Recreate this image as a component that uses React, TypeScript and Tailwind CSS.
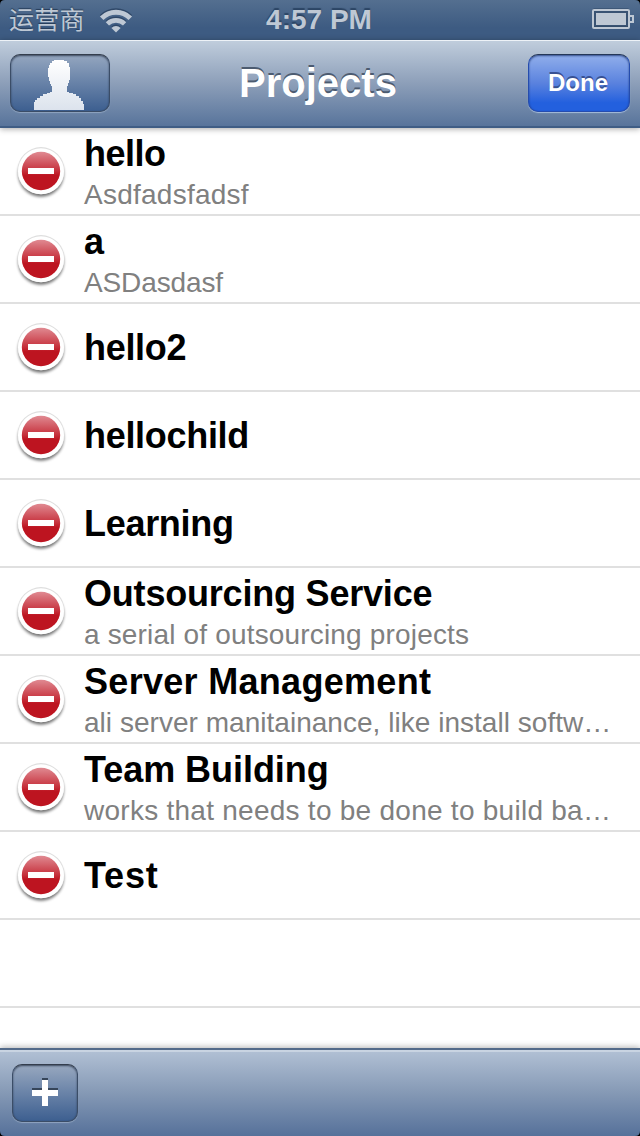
import React from 'react';

type Project = { name: string; detail?: string; nameSpacing: string; detailSpacing?: string };

const projects: Project[] = [
  { name: 'hello', detail: 'Asdfadsfadsf', nameSpacing: 'tracking-[-0.5px]', detailSpacing: 'tracking-[0.25px]' },
  { name: 'a', detail: 'ASDasdasf', nameSpacing: 'tracking-[-0.1px]', detailSpacing: 'tracking-[-0.12px]' },
  { name: 'hello2', nameSpacing: 'tracking-[-0.3px]' },
  { name: 'hellochild', nameSpacing: 'tracking-[-0.3px]' },
  { name: 'Learning', nameSpacing: 'tracking-[-0.3px]' },
  {
    name: 'Outsourcing Service',
    detail: 'a serial of outsourcing projects',
    nameSpacing: 'tracking-[-0.2px]',
    detailSpacing: 'tracking-[0.17px]',
  },
  {
    name: 'Server Management',
    detail: 'ali server manitainance, like install softw…',
    nameSpacing: 'tracking-[0.3px]',
    detailSpacing: 'tracking-[0.03px]',
  },
  {
    name: 'Team Building',
    detail: 'works that needs to be done to build ba…',
    nameSpacing: 'tracking-[-0.05px]',
    detailSpacing: 'tracking-[0.26px]',
  },
  { name: 'Test', nameSpacing: 'tracking-[0.8px]' },
];

function DeleteIcon() {
  return (
    <svg className="ml-[12px] h-[64px] w-[60px] shrink-0" viewBox="0 0 60 64">
      <defs>
        <linearGradient id="gloss" x1="0" y1="0" x2="0" y2="1">
          <stop offset="0" stopColor="#e08a92" />
          <stop offset="0.5" stopColor="#c6303b" />
          <stop offset="0.62" stopColor="#bd1420" />
          <stop offset="1" stopColor="#bd1420" />
        </linearGradient>
        <filter id="soft" x="-30%" y="-30%" width="160%" height="160%">
          <feGaussianBlur stdDeviation="1.8" />
        </filter>
      </defs>
      <circle cx="29" cy="35" r="22.8" fill="#000" opacity="0.55" filter="url(#soft)" />
      <circle cx="29" cy="31.7" r="23.6" fill="#dedede" />
      <circle cx="29" cy="32.2" r="23" fill="#fff" />
      <circle cx="29" cy="32" r="19.2" fill="url(#gloss)" />
      <rect x="16" y="29" width="26" height="6" fill="#fff" />
    </svg>
  );
}

function Row({ project }: { project?: Project }) {
  return (
    <li className="flex h-[88px] shrink-0 items-center border-b-2 border-[#e0e0e0]">
      {project && (
        <>
          <DeleteIcon />
          <div className={`ml-[12px] flex min-w-0 flex-col whitespace-nowrap ${project.detail ? 'pt-[4px]' : 'pt-[2px]'}`}>
            <span className={`h-[44px] text-[36px] font-bold leading-[44px] text-black ${project.nameSpacing}`}>
              {project.name}
            </span>
            {project.detail && (
              <span className={`h-[38px] text-[28px] leading-[38px] text-[#808080] ${project.detailSpacing}`}>
                {project.detail}
              </span>
            )}
          </div>
        </>
      )}
    </li>
  );
}

function WifiArcs() {
  return (
    <>
      <path d="M2.7 10.7A20.3 20.3 0 0 1 31.3 10.7" fill="none" stroke="currentColor" strokeWidth="5" />
      <path d="M8.4 16.4A12.2 12.2 0 0 1 25.6 16.4" fill="none" stroke="currentColor" strokeWidth="4.6" />
      <path d="M12.4 20.5A6.5 6.5 0 0 1 21.6 20.5L17 25Z" fill="currentColor" />
    </>
  );
}

export default function App() {
  return (
    <div className="relative flex h-[1136px] w-[640px] flex-col overflow-hidden bg-white font-['Liberation_Sans','Noto_Sans_CJK_SC',sans-serif]">
      <header className="grid h-[40px] shrink-0 grid-cols-[1fr_auto_1fr] items-center bg-linear-to-b from-[#546f90] to-[#3d5b82] to-70% px-[9px] text-[#bec8d4]">
        <div className="flex items-center">
          <span className="text-[25px] leading-[40px] tracking-[0.3px] [text-shadow:0_-1px_1px_#263c58]">运营商</span>
          <svg className="ml-[14px] h-[26px] w-[34px]" viewBox="0 0 34 26">
            <g className="text-[#2f4868]" transform="translate(0 -1)">
              <WifiArcs />
            </g>
            <g transform="translate(0 0.5)">
              <WifiArcs />
            </g>
          </svg>
        </div>
        <time className="relative -left-px text-[28px] font-bold leading-[40px] [text-shadow:0_-2px_1px_#2c4564]">4:57 PM</time>
        <svg className="-mr-[3px] h-[24px] w-[42px] justify-self-end" viewBox="0 0 42 24">
          <rect x="1" y="1" width="36" height="18" rx="1" fill="#395373" stroke="#304865" />
          <rect x="1" y="2" width="36" height="18" rx="1" fill="none" stroke="currentColor" strokeWidth="2" />
          <rect x="4" y="5" width="30" height="12" fill="currentColor" />
          <path d="M38 8h3v6h-3" fill="none" stroke="currentColor" strokeWidth="2" />
        </svg>
      </header>
      <nav className="z-10 flex h-[88px] shrink-0 items-center justify-between border-b-2 border-[#3f5d85] bg-linear-to-b from-[#c1cedd] via-[#8d9fb9] to-[#58749b] px-[10px] shadow-[0_1px_6px_rgba(0,0,0,0.35),inset_0_1px_0_#edf2f7]">
        <button
          className="flex h-[58px] w-[100px] items-end justify-center rounded-[10px] border border-[#3b4d67] border-t-[#343e4d] bg-linear-to-b from-[#94a6bf] to-[#3d5f90] pb-px shadow-[0_1px_1px_#91a5c0,inset_0_1px_2px_rgba(30,42,62,0.75)]"
          aria-label="Account"
        >
          <svg className="ml-[-2px] h-[50px] w-[50px]" viewBox="0 0 50 50">
            <defs>
              <linearGradient id="person" x1="0" y1="0" x2="0" y2="1">
                <stop stopColor="#fff" />
                <stop offset="1" stopColor="#dce3ed" />
              </linearGradient>
            </defs>
            <path
              d="M20 0h10v1h3v2h2v4h1v13h-1v3h-1v3h-1v6h2v1h4v1h3v2h3v2h2v3h2v3h1v6H0v-8h1v-2h2v-2h3v-2h3v-2h4v-1h3v-1h2v-6h-1v-2h-1v-3h-1v-4h-1V8h1V5h1V3h2V1h2z"
              fill="url(#person)"
            />
          </svg>
        </button>
        <h1 className="relative -left-px text-[40px] font-bold leading-[48px] text-white [text-shadow:0_-2px_0_#4c5b70]">Projects</h1>
        <button className="h-[58px] w-[102px] rounded-[10px] border border-[#254cae] border-t-[#253757] bg-linear-to-b from-[#91aeeb] via-[#5a82de] to-[#2360de] to-85% pr-[2px] text-[24px] font-bold leading-[56px] text-white shadow-[0_1px_1px_#a7bddb,inset_0_1px_2px_rgba(20,45,105,0.75)] [text-shadow:0_-2px_0_#385193]">
          Done
        </button>
      </nav>
      <ul className="flex min-h-0 flex-1 flex-col overflow-hidden bg-white">
        {projects.map((p) => (
          <Row key={p.name} project={p} />
        ))}
        <Row />
      </ul>
      <footer className="flex h-[88px] shrink-0 items-center border-t-2 border-[#536a89] bg-linear-to-b from-[#b2c1d5] via-[#8599b5] to-[#56719a] px-[12px] shadow-[0_-1px_6px_rgba(0,0,0,0.3),inset_0_2px_0_#c9d4e2]">
        <button
          className="flex h-[58px] w-[66px] items-center justify-center rounded-[10px] border border-[#3b4d67] border-t-[#343e4d] bg-linear-to-b from-[#98a8bf] to-[#3d5f90] shadow-[0_1px_1px_#91a5c0,inset_0_1px_2px_rgba(30,42,62,0.75)]"
          aria-label="Add"
        >
          <svg className="h-[30px] w-[26px]" viewBox="0 0 26 30">
            <path d="M10 0h6v10h10v6H16v10h-6V16H0v-6h10z" fill="#364559" />
            <path d="M10 2h6v10h10v6H16v10h-6V18H0v-6h10z" fill="#fff" />
          </svg>
        </button>
      </footer>
      <svg className="pointer-events-none absolute inset-0 z-20" width="640" height="1136">
        <path d="M0 0h5Q0 0 0 5ZM640 0h-5Q640 0 640 5ZM0 1136h5Q0 1136 0 1131ZM640 1136h-5Q640 1136 640 1131Z" fill="#000" />
      </svg>
    </div>
  );
}
